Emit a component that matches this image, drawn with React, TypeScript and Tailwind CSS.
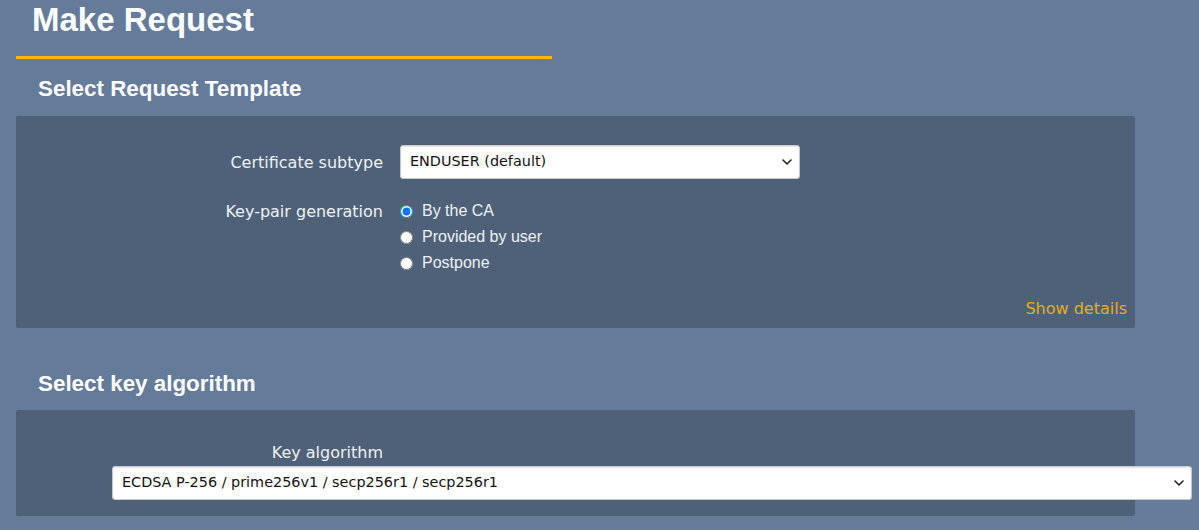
import React from "react";

function Chevron() {
  return (
    <svg
      className="pointer-events-none absolute right-[8px] top-1/2 -translate-y-1/2"
      width="10"
      height="6"
      viewBox="0 0 10 6"
      fill="none"
    >
      <path d="M1 1l4 4 4-4" stroke="#222" strokeWidth="1.6" strokeLinecap="round" strokeLinejoin="round" />
    </svg>
  );
}

function Select({ value, className }: { value: string; className: string }) {
  return (
    <div className={`relative ${className}`}>
      <select
        defaultValue={value}
        className="block h-[34px] w-full appearance-none rounded-[3px] border border-[#c9c9c9] bg-white pl-[9px] pr-6 text-[14.4px] text-[#111] shadow-[inset_0_1px_2px_rgba(0,0,0,0.12)] font-['DejaVu_Sans',sans-serif]"
      >
        <option>{value}</option>
      </select>
      <Chevron />
    </div>
  );
}

const keyPairOptions = ["By the CA", "Provided by user", "Postpone"];

export default function App() {
  return (
    <div className="min-h-screen bg-[#657b9a] px-4 font-['DejaVu_Sans',sans-serif] text-[16px] text-[#eef1f4]">
      <h1 className="w-[536px] border-b-[3px] border-[#ffb800] pl-[16px] pt-[1px] pb-[17px] font-['Liberation_Sans',Arial,sans-serif] text-[33px] font-bold leading-[38px] text-white">
        Make Request
      </h1>

      <h2 className="mt-[17px] mb-[15px] pl-[22px] font-['Liberation_Sans',Arial,sans-serif] text-[22.4px] font-bold leading-[25px] text-white">
        Select Request Template
      </h2>

      <div className="w-[1119px] rounded-[2px] bg-[#4f6178] pt-[29px] pr-2 pb-[10px]">
        <div className="grid grid-cols-[367px_400px] items-center gap-x-[17px] gap-y-[19px]">
          <div className="text-right leading-[19px]">Certificate subtype</div>
          <Select value="ENDUSER (default)" className="w-[400px]" />

          <div className="self-start pt-[4px] text-right leading-[19px]">Key-pair generation</div>
          <div className="flex flex-col font-['Liberation_Sans',Arial,sans-serif]">
            {keyPairOptions.map((opt, i) => (
              <label key={opt} className="flex h-[26px] items-center gap-[9px] text-[16px]">
                <input
                  type="radio"
                  name="keypair"
                  defaultChecked={i === 0}
                  className="m-0 h-[13px] w-[13px]"
                />
                {opt}
              </label>
            ))}
          </div>
        </div>
        <div className="mt-[23px] text-right leading-[19px] text-[#e6ac1e]">Show details</div>
      </div>

      <h2 className="mt-[43px] mb-[14px] pl-[22px] font-['Liberation_Sans',Arial,sans-serif] text-[22.4px] font-bold leading-[25px] text-white">
        Select key algorithm
      </h2>

      <div className="w-[1119px] rounded-[2px] bg-[#4f6178] pt-[33px] pb-[16px]">
        <div className="w-[367px] text-right leading-[19px]">Key algorithm</div>
        <Select
          value="ECDSA P-256 / prime256v1 / secp256r1 / secp256r1"
          className="mt-[4px] ml-[96px] w-[1080px]"
        />
      </div>
    </div>
  );
}
